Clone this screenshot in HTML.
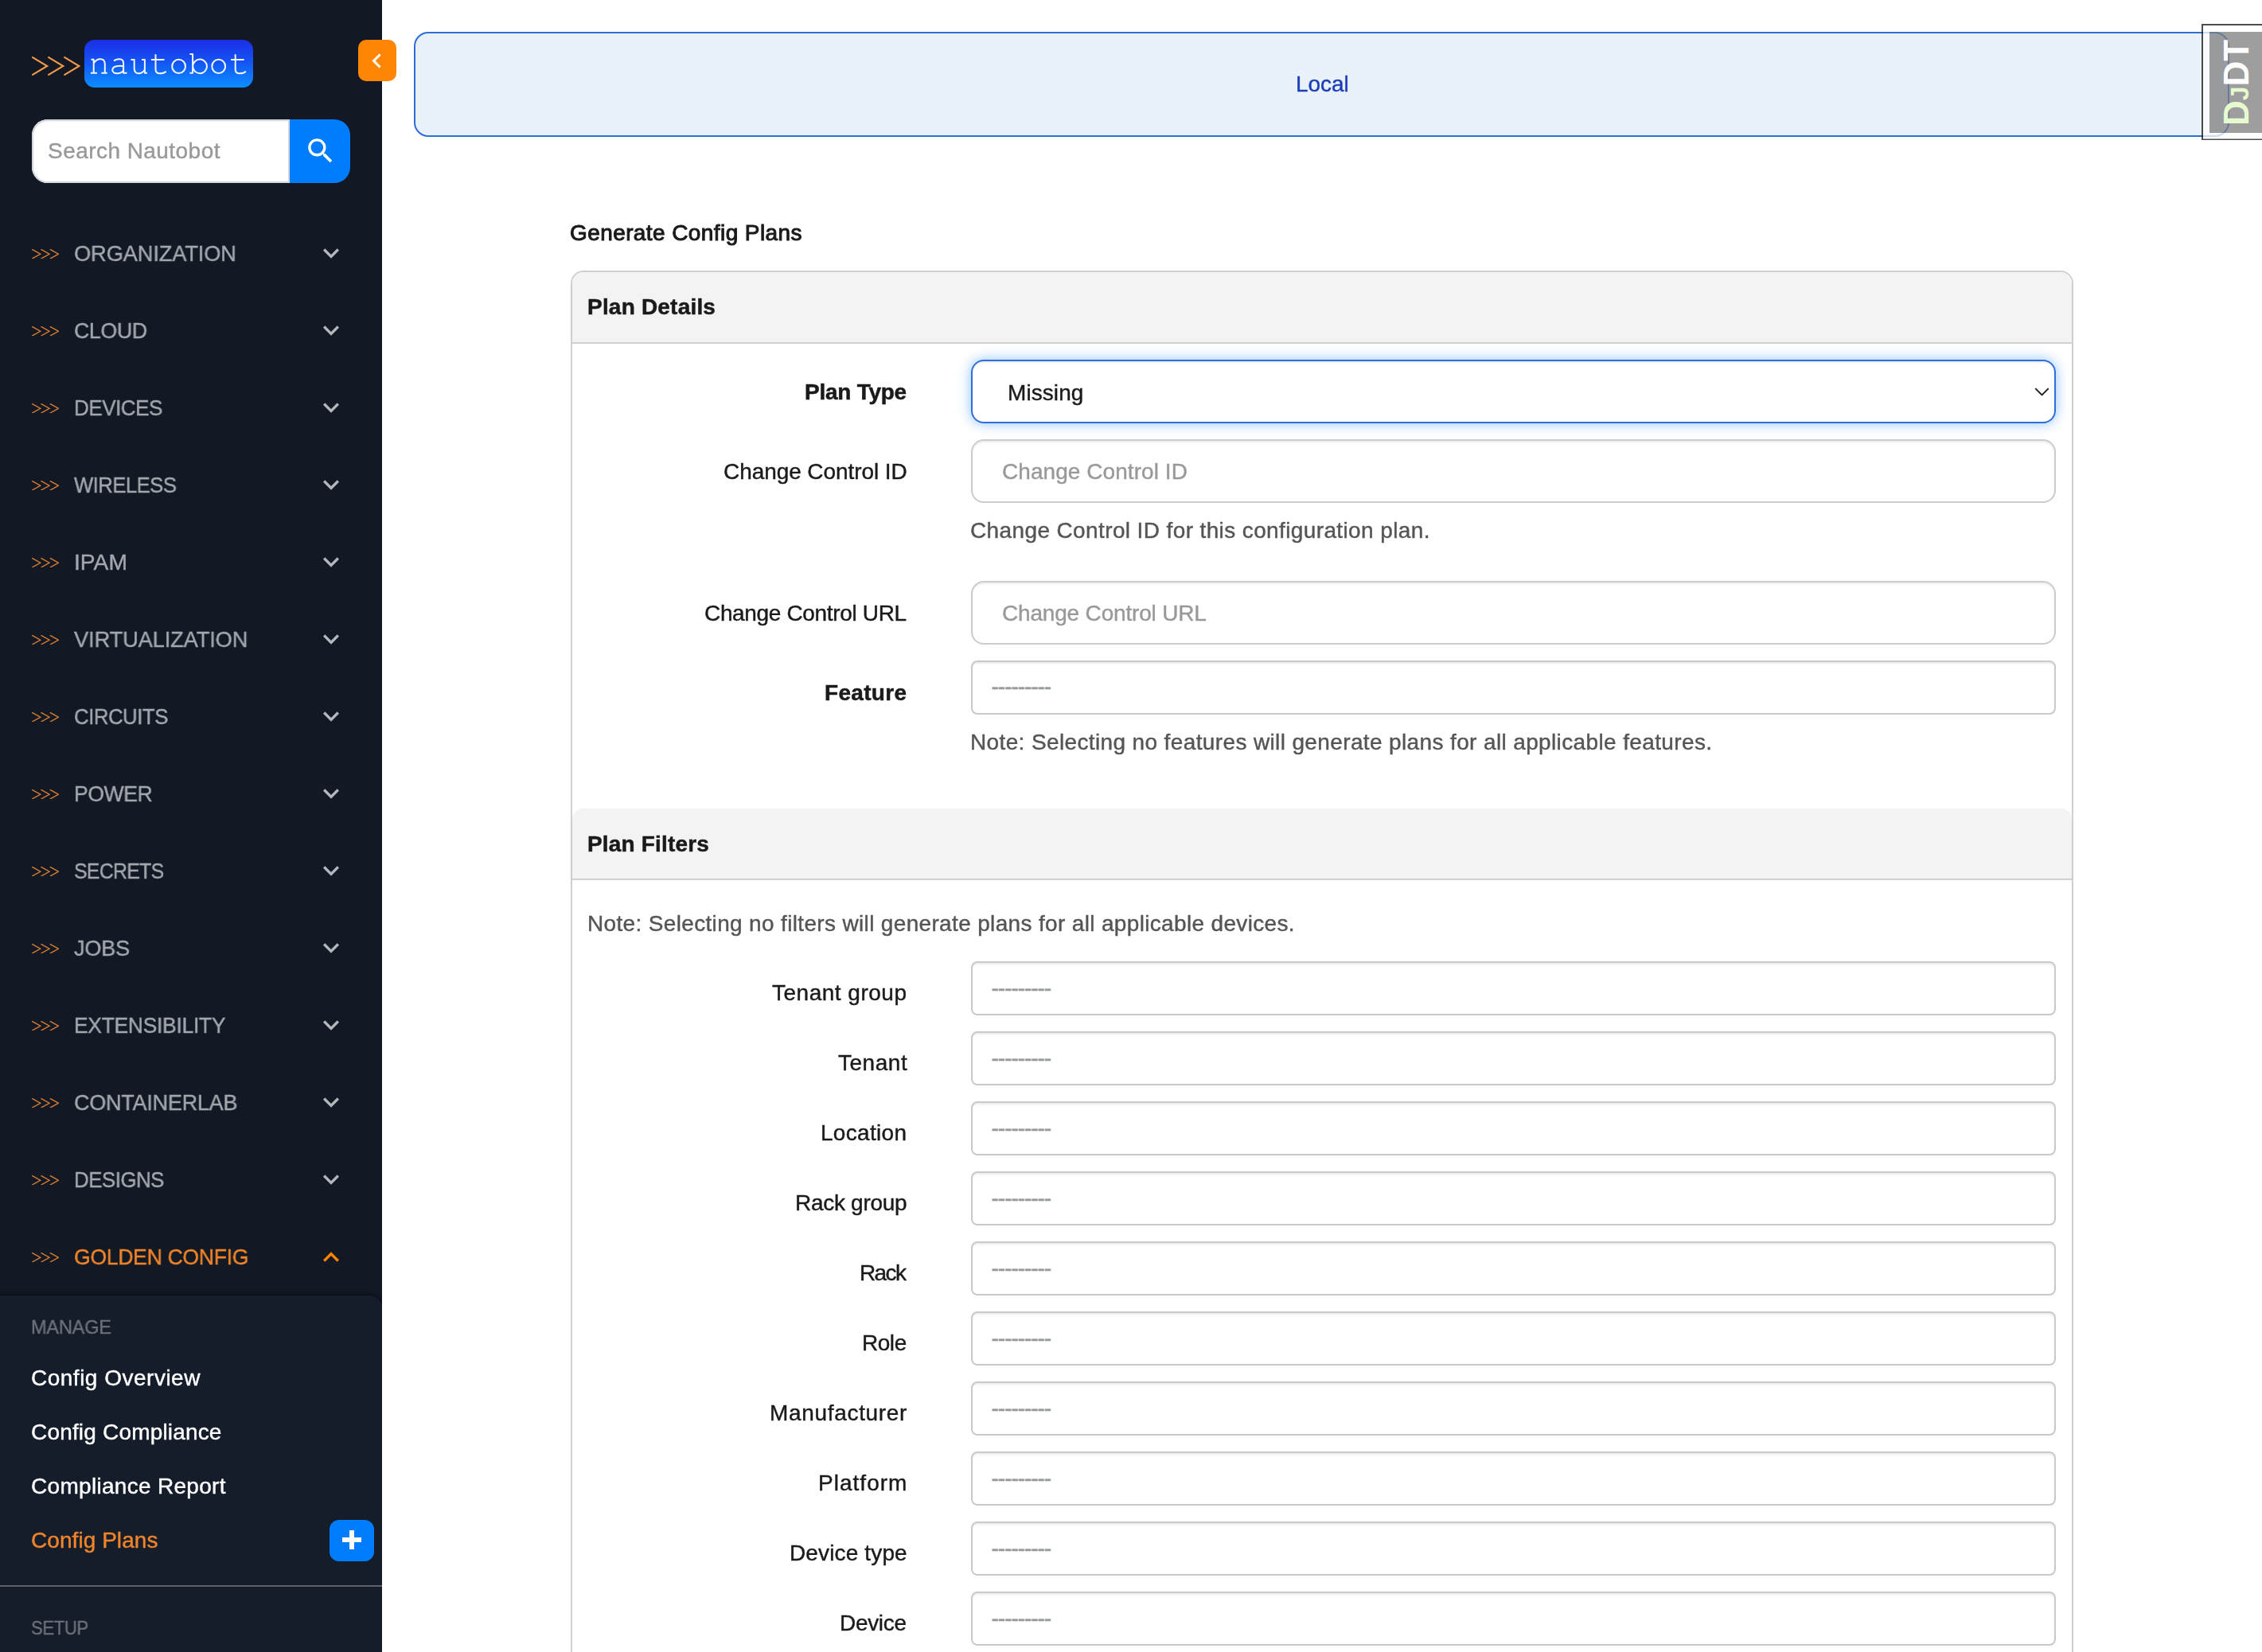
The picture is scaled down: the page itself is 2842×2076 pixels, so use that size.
<!DOCTYPE html>
<html lang="en"><head><meta charset="utf-8"><title>Generate Config Plans | Nautobot</title>
<style>
html,body{margin:0;padding:0;overflow:hidden;background:#fff}
body{width:2842px;height:2076px;font-family:"Liberation Sans",sans-serif}
#page{position:relative;width:2842px;height:2076px;overflow:hidden;background:#fff}
.a{position:absolute;display:block}
.t{position:absolute;white-space:pre;font-family:"Liberation Sans",sans-serif;will-change:transform}
#sidebar{left:0;top:0;width:480px;height:2076px;background:#121924;overflow:hidden}
#submenu{left:0;top:1628px;width:480px;height:460px;background:#161d2a;border-radius:0 16px 0 0;box-shadow:0 -2px 4px rgba(0,0,0,.4)}
#hr{left:0;top:1992px;width:480px;height:2px;background:#5b606b}
#logo{left:106px;top:50px;width:212px;height:60px;border-radius:13px;background:linear-gradient(180deg,#1b2fe6 0%,#1552f3 45%,#0a8fff 100%)}
#search{left:40px;top:150px;width:324px;height:80px;background:#fff;border-radius:20px 0 0 20px;box-shadow:inset 0 0 0 2px #d3d7dc,inset 0 3px 2px rgba(0,0,0,.06)}
#sbtn{left:364px;top:150px;width:76px;height:80px;background:#007dff;border-radius:0 20px 20px 0}
#toggle{left:450px;top:50px;width:48px;height:52px;background:#ff8504;border-radius:10px}
#plus{left:414px;top:1910px;width:56px;height:52px;background:#007dff;border-radius:12px}
#banner{left:520px;top:40px;width:2277px;height:128px;border:2px solid #2b6fd2;border-radius:18px;background:#e9f1fa}
#panel{left:717px;top:340px;width:1884px;height:1800px;border:2px solid #cfcfcf;border-radius:16px;background:#fff}
.ph{left:719px;width:1884px;height:88px;background:#f3f3f3;border-bottom:2px solid #d0d0d0;border-radius:14px 14px 0 0}
.inp{position:absolute;left:1220px;width:1359px;height:76px;border:2px solid #cccccc;border-radius:16px;background:#fff;box-shadow:inset 0 2px 2px rgba(0,0,0,.075)}
.s2{position:absolute;left:1220px;width:1359px;height:64px;border:2px solid #c9c9c9;border-radius:8px;background:#fff;box-shadow:inset 0 2px 2px rgba(0,0,0,.075)}
.dash{position:absolute;left:1245.6px;white-space:pre;font-size:28px;line-height:40px;color:#999;letter-spacing:-1.05px;-webkit-text-stroke:0.5px #999}
#sel{border-color:#2f6fd8;box-shadow:inset 0 2px 2px rgba(0,0,0,.075),0 0 16px rgba(64,150,255,.6)}
</style></head><body>
<div id="page">
<div id="sidebar" class="a"><div id="submenu" class="a"></div></div>
<div id="hr" class="a"></div>
<svg class="a" style="left:40px;top:71.0px;opacity:1" width="60.5" height="24" viewBox="0 0 60.5 24" fill="none" stroke="#f59a45" stroke-width="2.1" stroke-linecap="round" stroke-linejoin="miter"><polyline points="1.05,1.05 19.22,12.00 1.05,22.95"/><polyline points="21.17,1.05 39.33,12.00 21.17,22.95"/><polyline points="41.28,1.05 59.45,12.00 41.28,22.95"/></svg>
<div id="logo" class="a"><svg class="a" style="left:0;top:0" width="212" height="60" viewBox="0 0 212 60" fill="none" stroke="#f2f8ff" stroke-width="2" stroke-linecap="butt" stroke-linejoin="round"><title>nautobot</title><path d="M8.50,24.8H11.70V41.8M8.00,41.8H16.00M21.40,41.8H28.70M11.70,29.5C13.90,26 16.90,24.3 19.90,24.3C23.90,24.3 25.80,27 25.80,30.5V41.8M36.95,26.3C39.45,24.9 41.45,24.3 43.80,24.3C47.45,24.3 49.10,26.3 49.10,29.5V41.8H53.50M49.10,33.4C44.45,32.2 35.25,32.6 35.25,38C35.25,41 38.45,42.3 41.45,42.3C44.95,42.3 47.45,40.8 49.10,38.6M58.40,25H62.70V36C62.70,40 65.00,42.3 68.30,42.3C71.50,42.3 74.00,40.5 75.90,37.5M72.00,25H75.90V41.8H78.80M89.50,18.3V37C89.50,40.5 91.55,42.3 94.80,42.3C98.05,42.3 101.05,41.2 102.75,39.7M83.85,25H100.50M110.20,33.4A8.4,8.7 0 1,0 127.00,33.4A8.4,8.7 0 1,0 110.20,33.4ZM132.40,17.9H136.10V41.8H132.40M136.25,33.4A8.85,8.8 0 1,1 153.95,33.4A8.85,8.8 0 1,1 136.25,33.4ZM160.30,33.4A8.4,8.7 0 1,0 177.10,33.4A8.4,8.7 0 1,0 160.30,33.4ZM189.70,18.3V37C189.70,40.5 191.75,42.3 195.00,42.3C198.25,42.3 201.25,41.2 202.95,39.7M184.05,25H200.70"/></svg></div>
<div id="search" class="a"></div>
<div id="sbtn" class="a"><svg class="a" style="left:17.7px;top:18.6px" width="41.3" height="41.3" viewBox="0 0 24 24"><path fill="#fff" d="M9.5,3A6.5,6.5 0 0,1 16,9.5C16,11.11 15.41,12.59 14.44,13.73L14.71,14H15.5L20.5,19L19,20.5L14,15.5V14.71L13.73,14.44C12.59,15.41 11.11,16 9.5,16A6.5,6.5 0 0,1 3,9.5A6.5,6.5 0 0,1 9.5,3M9.5,5C7,5 5,7 5,9.5C5,12 7,14 9.5,14C12,14 14,12 14,9.5C14,7 12,5 9.5,5Z"/></svg></div>
<svg class="a" style="left:40px;top:312.75px;opacity:0.9" width="34" height="12.5" viewBox="0 0 34 12.5" fill="none" stroke="#f08a33" stroke-width="1.4" stroke-linecap="round" stroke-linejoin="miter"><polyline points="0.70,0.70 10.69,6.25 0.70,11.80"/><polyline points="12.00,0.70 22.00,6.25 12.00,11.80"/><polyline points="23.31,0.70 33.30,6.25 23.31,11.80"/></svg><svg class="a" style="left:396px;top:298px" width="40" height="40" viewBox="0 0 24 24"><path fill="#b4b7bc" d="M7.41,8.58L12,13.17L16.59,8.58L18,10L12,16L6,10L7.41,8.58Z"/></svg>
<svg class="a" style="left:40px;top:409.75px;opacity:0.9" width="34" height="12.5" viewBox="0 0 34 12.5" fill="none" stroke="#f08a33" stroke-width="1.4" stroke-linecap="round" stroke-linejoin="miter"><polyline points="0.70,0.70 10.69,6.25 0.70,11.80"/><polyline points="12.00,0.70 22.00,6.25 12.00,11.80"/><polyline points="23.31,0.70 33.30,6.25 23.31,11.80"/></svg><svg class="a" style="left:396px;top:395px" width="40" height="40" viewBox="0 0 24 24"><path fill="#b4b7bc" d="M7.41,8.58L12,13.17L16.59,8.58L18,10L12,16L6,10L7.41,8.58Z"/></svg>
<svg class="a" style="left:40px;top:506.75px;opacity:0.9" width="34" height="12.5" viewBox="0 0 34 12.5" fill="none" stroke="#f08a33" stroke-width="1.4" stroke-linecap="round" stroke-linejoin="miter"><polyline points="0.70,0.70 10.69,6.25 0.70,11.80"/><polyline points="12.00,0.70 22.00,6.25 12.00,11.80"/><polyline points="23.31,0.70 33.30,6.25 23.31,11.80"/></svg><svg class="a" style="left:396px;top:492px" width="40" height="40" viewBox="0 0 24 24"><path fill="#b4b7bc" d="M7.41,8.58L12,13.17L16.59,8.58L18,10L12,16L6,10L7.41,8.58Z"/></svg>
<svg class="a" style="left:40px;top:603.75px;opacity:0.9" width="34" height="12.5" viewBox="0 0 34 12.5" fill="none" stroke="#f08a33" stroke-width="1.4" stroke-linecap="round" stroke-linejoin="miter"><polyline points="0.70,0.70 10.69,6.25 0.70,11.80"/><polyline points="12.00,0.70 22.00,6.25 12.00,11.80"/><polyline points="23.31,0.70 33.30,6.25 23.31,11.80"/></svg><svg class="a" style="left:396px;top:589px" width="40" height="40" viewBox="0 0 24 24"><path fill="#b4b7bc" d="M7.41,8.58L12,13.17L16.59,8.58L18,10L12,16L6,10L7.41,8.58Z"/></svg>
<svg class="a" style="left:40px;top:700.75px;opacity:0.9" width="34" height="12.5" viewBox="0 0 34 12.5" fill="none" stroke="#f08a33" stroke-width="1.4" stroke-linecap="round" stroke-linejoin="miter"><polyline points="0.70,0.70 10.69,6.25 0.70,11.80"/><polyline points="12.00,0.70 22.00,6.25 12.00,11.80"/><polyline points="23.31,0.70 33.30,6.25 23.31,11.80"/></svg><svg class="a" style="left:396px;top:686px" width="40" height="40" viewBox="0 0 24 24"><path fill="#b4b7bc" d="M7.41,8.58L12,13.17L16.59,8.58L18,10L12,16L6,10L7.41,8.58Z"/></svg>
<svg class="a" style="left:40px;top:797.75px;opacity:0.9" width="34" height="12.5" viewBox="0 0 34 12.5" fill="none" stroke="#f08a33" stroke-width="1.4" stroke-linecap="round" stroke-linejoin="miter"><polyline points="0.70,0.70 10.69,6.25 0.70,11.80"/><polyline points="12.00,0.70 22.00,6.25 12.00,11.80"/><polyline points="23.31,0.70 33.30,6.25 23.31,11.80"/></svg><svg class="a" style="left:396px;top:783px" width="40" height="40" viewBox="0 0 24 24"><path fill="#b4b7bc" d="M7.41,8.58L12,13.17L16.59,8.58L18,10L12,16L6,10L7.41,8.58Z"/></svg>
<svg class="a" style="left:40px;top:894.75px;opacity:0.9" width="34" height="12.5" viewBox="0 0 34 12.5" fill="none" stroke="#f08a33" stroke-width="1.4" stroke-linecap="round" stroke-linejoin="miter"><polyline points="0.70,0.70 10.69,6.25 0.70,11.80"/><polyline points="12.00,0.70 22.00,6.25 12.00,11.80"/><polyline points="23.31,0.70 33.30,6.25 23.31,11.80"/></svg><svg class="a" style="left:396px;top:880px" width="40" height="40" viewBox="0 0 24 24"><path fill="#b4b7bc" d="M7.41,8.58L12,13.17L16.59,8.58L18,10L12,16L6,10L7.41,8.58Z"/></svg>
<svg class="a" style="left:40px;top:991.75px;opacity:0.9" width="34" height="12.5" viewBox="0 0 34 12.5" fill="none" stroke="#f08a33" stroke-width="1.4" stroke-linecap="round" stroke-linejoin="miter"><polyline points="0.70,0.70 10.69,6.25 0.70,11.80"/><polyline points="12.00,0.70 22.00,6.25 12.00,11.80"/><polyline points="23.31,0.70 33.30,6.25 23.31,11.80"/></svg><svg class="a" style="left:396px;top:977px" width="40" height="40" viewBox="0 0 24 24"><path fill="#b4b7bc" d="M7.41,8.58L12,13.17L16.59,8.58L18,10L12,16L6,10L7.41,8.58Z"/></svg>
<svg class="a" style="left:40px;top:1088.75px;opacity:0.9" width="34" height="12.5" viewBox="0 0 34 12.5" fill="none" stroke="#f08a33" stroke-width="1.4" stroke-linecap="round" stroke-linejoin="miter"><polyline points="0.70,0.70 10.69,6.25 0.70,11.80"/><polyline points="12.00,0.70 22.00,6.25 12.00,11.80"/><polyline points="23.31,0.70 33.30,6.25 23.31,11.80"/></svg><svg class="a" style="left:396px;top:1074px" width="40" height="40" viewBox="0 0 24 24"><path fill="#b4b7bc" d="M7.41,8.58L12,13.17L16.59,8.58L18,10L12,16L6,10L7.41,8.58Z"/></svg>
<svg class="a" style="left:40px;top:1185.75px;opacity:0.9" width="34" height="12.5" viewBox="0 0 34 12.5" fill="none" stroke="#f08a33" stroke-width="1.4" stroke-linecap="round" stroke-linejoin="miter"><polyline points="0.70,0.70 10.69,6.25 0.70,11.80"/><polyline points="12.00,0.70 22.00,6.25 12.00,11.80"/><polyline points="23.31,0.70 33.30,6.25 23.31,11.80"/></svg><svg class="a" style="left:396px;top:1171px" width="40" height="40" viewBox="0 0 24 24"><path fill="#b4b7bc" d="M7.41,8.58L12,13.17L16.59,8.58L18,10L12,16L6,10L7.41,8.58Z"/></svg>
<svg class="a" style="left:40px;top:1282.75px;opacity:0.9" width="34" height="12.5" viewBox="0 0 34 12.5" fill="none" stroke="#f08a33" stroke-width="1.4" stroke-linecap="round" stroke-linejoin="miter"><polyline points="0.70,0.70 10.69,6.25 0.70,11.80"/><polyline points="12.00,0.70 22.00,6.25 12.00,11.80"/><polyline points="23.31,0.70 33.30,6.25 23.31,11.80"/></svg><svg class="a" style="left:396px;top:1268px" width="40" height="40" viewBox="0 0 24 24"><path fill="#b4b7bc" d="M7.41,8.58L12,13.17L16.59,8.58L18,10L12,16L6,10L7.41,8.58Z"/></svg>
<svg class="a" style="left:40px;top:1379.75px;opacity:0.9" width="34" height="12.5" viewBox="0 0 34 12.5" fill="none" stroke="#f08a33" stroke-width="1.4" stroke-linecap="round" stroke-linejoin="miter"><polyline points="0.70,0.70 10.69,6.25 0.70,11.80"/><polyline points="12.00,0.70 22.00,6.25 12.00,11.80"/><polyline points="23.31,0.70 33.30,6.25 23.31,11.80"/></svg><svg class="a" style="left:396px;top:1365px" width="40" height="40" viewBox="0 0 24 24"><path fill="#b4b7bc" d="M7.41,8.58L12,13.17L16.59,8.58L18,10L12,16L6,10L7.41,8.58Z"/></svg>
<svg class="a" style="left:40px;top:1476.75px;opacity:0.9" width="34" height="12.5" viewBox="0 0 34 12.5" fill="none" stroke="#f08a33" stroke-width="1.4" stroke-linecap="round" stroke-linejoin="miter"><polyline points="0.70,0.70 10.69,6.25 0.70,11.80"/><polyline points="12.00,0.70 22.00,6.25 12.00,11.80"/><polyline points="23.31,0.70 33.30,6.25 23.31,11.80"/></svg><svg class="a" style="left:396px;top:1462px" width="40" height="40" viewBox="0 0 24 24"><path fill="#b4b7bc" d="M7.41,8.58L12,13.17L16.59,8.58L18,10L12,16L6,10L7.41,8.58Z"/></svg>
<svg class="a" style="left:40px;top:1573.75px;opacity:0.9" width="34" height="12.5" viewBox="0 0 34 12.5" fill="none" stroke="#f08a33" stroke-width="1.4" stroke-linecap="round" stroke-linejoin="miter"><polyline points="0.70,0.70 10.69,6.25 0.70,11.80"/><polyline points="12.00,0.70 22.00,6.25 12.00,11.80"/><polyline points="23.31,0.70 33.30,6.25 23.31,11.80"/></svg><svg class="a" style="left:396px;top:1560px" width="40" height="40" viewBox="0 0 24 24"><path fill="#ff8504" d="M7.41,15.41L12,10.83L16.59,15.41L18,14L12,8L6,14L7.41,15.41Z"/></svg>

<div id="plus" class="a"><svg class="a" style="left:10px;top:6.5px" width="36" height="36" viewBox="0 0 24 24"><path fill="#fff" d="M20 14H14V20H10V14H4V10H10V4H14V10H20V14Z"/></svg></div>

<div id="banner" class="a"></div>
<div id="panel" class="a"></div>
<div class="a ph" style="top:342px"></div>
<div class="a ph" style="top:1016px"></div>
<div id="sel" class="inp" style="top:452px"></div>
<svg class="a" style="left:2556.4px;top:486.6px" width="19" height="11" viewBox="0 0 19 11" fill="none" stroke="#222" stroke-width="2" stroke-linecap="round" stroke-linejoin="round"><polyline points="1.8,1.6 9.5,9.4 17.2,1.6"/></svg>
<div class="inp" style="top:552px"></div>
<div class="inp" style="top:730px"></div>
<div class="s2" style="top:830px"></div><span class="dash" style="top:843px">---------</span>
<div class="s2" style="top:1208px"></div><span class="dash" style="top:1222px">---------</span>
<div class="s2" style="top:1296px"></div><span class="dash" style="top:1310px">---------</span>
<div class="s2" style="top:1384px"></div><span class="dash" style="top:1398px">---------</span>
<div class="s2" style="top:1472px"></div><span class="dash" style="top:1486px">---------</span>
<div class="s2" style="top:1560px"></div><span class="dash" style="top:1574px">---------</span>
<div class="s2" style="top:1648px"></div><span class="dash" style="top:1662px">---------</span>
<div class="s2" style="top:1736px"></div><span class="dash" style="top:1750px">---------</span>
<div class="s2" style="top:1824px"></div><span class="dash" style="top:1838px">---------</span>
<div class="s2" style="top:1912px"></div><span class="dash" style="top:1926px">---------</span>
<div class="s2" style="top:2000px"></div><span class="dash" style="top:2014px">---------</span>

<div id="toggle" class="a"><svg class="a" style="left:5.2px;top:8px" width="37" height="37" viewBox="0 0 24 24"><path fill="#fff5e8" d="M15.41,16.58L10.83,12L15.41,7.41L14,6L8,12L14,18L15.41,16.58Z"/></svg></div>
<span class="t" style="left:92.9px;top:299.0px;font-size:28px;line-height:40px;color:#a3a7ad;letter-spacing:-0.16px;-webkit-text-stroke:0.42px #a3a7ad;transform:scaleX(0.9745);transform-origin:0 50%;">ORGANIZATION</span>
<span class="t" style="left:92.9px;top:396.0px;font-size:28px;line-height:40px;color:#a3a7ad;letter-spacing:-0.38px;-webkit-text-stroke:0.42px #a3a7ad;transform:scaleX(0.9544);transform-origin:0 50%;">CLOUD</span>
<span class="t" style="left:92.9px;top:493.0px;font-size:28px;line-height:40px;color:#a3a7ad;letter-spacing:-0.5px;-webkit-text-stroke:0.42px #a3a7ad;transform:scaleX(0.9288);transform-origin:0 50%;">DEVICES</span>
<span class="t" style="left:92.9px;top:590.0px;font-size:28px;line-height:40px;color:#a3a7ad;letter-spacing:-0.59px;-webkit-text-stroke:0.42px #a3a7ad;transform:scaleX(0.9169);transform-origin:0 50%;">WIRELESS</span>
<span class="t" style="left:92.9px;top:687.0px;font-size:28px;line-height:40px;color:#a3a7ad;letter-spacing:0.04px;-webkit-text-stroke:0.42px #a3a7ad;transform:scaleX(1.0057);transform-origin:0 50%;">IPAM</span>
<span class="t" style="left:92.9px;top:784.0px;font-size:28px;line-height:40px;color:#a3a7ad;letter-spacing:-0.15px;-webkit-text-stroke:0.42px #a3a7ad;transform:scaleX(0.9743);transform-origin:0 50%;">VIRTUALIZATION</span>
<span class="t" style="left:92.9px;top:881.0px;font-size:28px;line-height:40px;color:#a3a7ad;letter-spacing:-0.52px;-webkit-text-stroke:0.42px #a3a7ad;transform:scaleX(0.9205);transform-origin:0 50%;">CIRCUITS</span>
<span class="t" style="left:92.9px;top:978.0px;font-size:28px;line-height:40px;color:#a3a7ad;letter-spacing:-0.46px;-webkit-text-stroke:0.42px #a3a7ad;transform:scaleX(0.9494);transform-origin:0 50%;">POWER</span>
<span class="t" style="left:92.9px;top:1075.0px;font-size:28px;line-height:40px;color:#a3a7ad;letter-spacing:-0.84px;-webkit-text-stroke:0.42px #a3a7ad;transform:scaleX(0.8899);transform-origin:0 50%;">SECRETS</span>
<span class="t" style="left:92.9px;top:1172.0px;font-size:28px;line-height:40px;color:#a3a7ad;letter-spacing:-0.26px;-webkit-text-stroke:0.42px #a3a7ad;transform:scaleX(0.9687);transform-origin:0 50%;">JOBS</span>
<span class="t" style="left:92.9px;top:1269.0px;font-size:28px;line-height:40px;color:#a3a7ad;letter-spacing:-0.32px;-webkit-text-stroke:0.42px #a3a7ad;transform:scaleX(0.9447);transform-origin:0 50%;">EXTENSIBILITY</span>
<span class="t" style="left:92.9px;top:1366.0px;font-size:28px;line-height:40px;color:#a3a7ad;letter-spacing:-0.24px;-webkit-text-stroke:0.42px #a3a7ad;transform:scaleX(0.9638);transform-origin:0 50%;">CONTAINERLAB</span>
<span class="t" style="left:92.9px;top:1463.0px;font-size:28px;line-height:40px;color:#a3a7ad;letter-spacing:-0.55px;-webkit-text-stroke:0.42px #a3a7ad;transform:scaleX(0.9238);transform-origin:0 50%;">DESIGNS</span>
<span class="t" style="left:92.9px;top:1560.0px;font-size:28px;line-height:40px;color:#f0842a;letter-spacing:-0.33px;-webkit-text-stroke:0.42px #f0842a;transform:scaleX(0.95);transform-origin:0 50%;">GOLDEN CONFIG</span>
<span class="t" style="left:38.9px;top:1648.0px;font-size:24px;line-height:40px;color:#6c717a;letter-spacing:-0.16px;-webkit-text-stroke:0.42px #6c717a;transform:scaleX(0.9774);transform-origin:0 50%;">MANAGE</span>
<span class="t" style="left:38.9px;top:2026.0px;font-size:24px;line-height:40px;color:#6c717a;letter-spacing:-0.51px;-webkit-text-stroke:0.42px #6c717a;transform:scaleX(0.9248);transform-origin:0 50%;">SETUP</span>
<span class="t" style="left:38.9px;top:1712.0px;font-size:28px;line-height:40px;color:#ffffff;letter-spacing:0.5px;-webkit-text-stroke:0.42px #ffffff;">Config Overview</span>
<span class="t" style="left:38.9px;top:1780.0px;font-size:28px;line-height:40px;color:#ffffff;letter-spacing:0.18px;-webkit-text-stroke:0.42px #ffffff;">Config Compliance</span>
<span class="t" style="left:38.9px;top:1848.0px;font-size:28px;line-height:40px;color:#ffffff;letter-spacing:0.3px;-webkit-text-stroke:0.42px #ffffff;">Compliance Report</span>
<span class="t" style="left:38.9px;top:1916.0px;font-size:28px;line-height:40px;color:#f0842a;letter-spacing:0.06px;-webkit-text-stroke:0.42px #f0842a;">Config Plans</span>
<span class="t" style="left:60.4px;top:170.2px;font-size:28px;line-height:40px;color:#999999;letter-spacing:0.45px;-webkit-text-stroke:0.42px #999999;">Search Nautobot</span>
<span class="t" style="left:1627.9px;top:86.3px;font-size:28px;line-height:40px;color:#1b3fb5;letter-spacing:-0.08px;-webkit-text-stroke:0.42px #1b3fb5;">Local</span>
<span class="t" style="left:715.9px;top:272.9px;font-size:28px;line-height:40px;color:#1a1a1a;letter-spacing:0.41px;-webkit-text-stroke:1.0px #1a1a1a;">Generate Config Plans</span>
<span class="t" style="left:738.0px;top:366.4px;font-size:28px;line-height:40px;color:#1a1a1a;font-weight:700;letter-spacing:0.2px;-webkit-text-stroke:0.5px #1a1a1a;">Plan Details</span>
<span class="t" style="left:738.0px;top:1041.1px;font-size:28px;line-height:40px;color:#1a1a1a;font-weight:700;letter-spacing:0.18px;-webkit-text-stroke:0.5px #1a1a1a;">Plan Filters</span>
<span class="t" style="left:1011.2px;top:472.9px;font-size:28px;line-height:40px;color:#1a1a1a;font-weight:700;letter-spacing:-0.25px;-webkit-text-stroke:0.5px #1a1a1a;">Plan Type</span>
<span class="t" style="left:908.6px;top:572.9px;font-size:28px;line-height:40px;color:#1a1a1a;letter-spacing:-0.07px;-webkit-text-stroke:0.42px #1a1a1a;">Change Control ID</span>
<span class="t" style="left:885.3px;top:750.9px;font-size:28px;line-height:40px;color:#1a1a1a;letter-spacing:-0.34px;-webkit-text-stroke:0.42px #1a1a1a;">Change Control URL</span>
<span class="t" style="left:1036.4px;top:850.6px;font-size:28px;line-height:40px;color:#1a1a1a;font-weight:700;letter-spacing:0.31px;-webkit-text-stroke:0.5px #1a1a1a;">Feature</span>
<span class="t" style="left:1266.4px;top:473.6px;font-size:28px;line-height:40px;color:#1a1a1a;letter-spacing:0.08px;-webkit-text-stroke:0.42px #1a1a1a;">Missing</span>
<span class="t" style="left:1258.6px;top:572.9px;font-size:28px;line-height:40px;color:#999999;letter-spacing:0.06px;-webkit-text-stroke:0.42px #999999;">Change Control ID</span>
<span class="t" style="left:1258.6px;top:750.9px;font-size:28px;line-height:40px;color:#999999;letter-spacing:-0.18px;-webkit-text-stroke:0.42px #999999;">Change Control URL</span>
<span class="t" style="left:1219.4px;top:646.6px;font-size:28px;line-height:40px;color:#555555;letter-spacing:0.38px;-webkit-text-stroke:0.42px #555555;">Change Control ID for this configuration plan.</span>
<span class="t" style="left:1219.4px;top:913.0px;font-size:28px;line-height:40px;color:#555555;letter-spacing:0.37px;-webkit-text-stroke:0.42px #555555;">Note: Selecting no features will generate plans for all applicable features.</span>
<span class="t" style="left:737.9px;top:1140.6px;font-size:28px;line-height:40px;color:#555555;letter-spacing:0.34px;-webkit-text-stroke:0.42px #555555;">Note: Selecting no filters will generate plans for all applicable devices.</span>
<span class="t" style="left:970.4px;top:1228.1px;font-size:28px;line-height:40px;color:#1a1a1a;letter-spacing:0.5px;-webkit-text-stroke:0.42px #1a1a1a;">Tenant group</span>
<span class="t" style="left:1052.7px;top:1316.1px;font-size:28px;line-height:40px;color:#1a1a1a;letter-spacing:0.52px;-webkit-text-stroke:0.42px #1a1a1a;">Tenant</span>
<span class="t" style="left:1031.4px;top:1404.1px;font-size:28px;line-height:40px;color:#1a1a1a;letter-spacing:0.3px;-webkit-text-stroke:0.42px #1a1a1a;">Location</span>
<span class="t" style="left:998.8px;top:1492.1px;font-size:28px;line-height:40px;color:#1a1a1a;letter-spacing:-0.29px;-webkit-text-stroke:0.42px #1a1a1a;">Rack group</span>
<span class="t" style="left:1080.4px;top:1580.1px;font-size:28px;line-height:40px;color:#1a1a1a;letter-spacing:-1.6px;-webkit-text-stroke:0.42px #1a1a1a;">Rack</span>
<span class="t" style="left:1083.2px;top:1668.1px;font-size:28px;line-height:40px;color:#1a1a1a;letter-spacing:-0.46px;-webkit-text-stroke:0.42px #1a1a1a;">Role</span>
<span class="t" style="left:967.0px;top:1756.1px;font-size:28px;line-height:40px;color:#1a1a1a;letter-spacing:0.68px;-webkit-text-stroke:0.42px #1a1a1a;">Manufacturer</span>
<span class="t" style="left:1028.0px;top:1844.1px;font-size:28px;line-height:40px;color:#1a1a1a;letter-spacing:1.02px;-webkit-text-stroke:0.42px #1a1a1a;">Platform</span>
<span class="t" style="left:991.7px;top:1932.1px;font-size:28px;line-height:40px;color:#1a1a1a;letter-spacing:0.14px;-webkit-text-stroke:0.42px #1a1a1a;">Device type</span>
<span class="t" style="left:1055.4px;top:2020.1px;font-size:28px;line-height:40px;color:#1a1a1a;letter-spacing:-0.32px;-webkit-text-stroke:0.42px #1a1a1a;">Device</span>
<div id="djdt" class="a" style="left:2766px;top:30px;width:120px;height:142px;border:2px solid #111;background:#fff;opacity:.75">
 <div class="a" style="left:0;top:0;width:120px;height:127px;border:8px solid #fff;border-right:0;background:#000;opacity:.5;box-sizing:content-box"></div>
</div>
<div class="a" style="left:2794px;top:157.8px;width:0;height:0;transform:rotate(-90deg);transform-origin:0 0">
 <span style="position:absolute;left:0;top:0;white-space:pre;font-weight:700;font-size:44px;line-height:32px;color:#fdfdfd;letter-spacing:0px"><span style="color:#e6fbd0">D<span style="font-size:32px">J</span></span>DT</span>
</div>
</div>
</body></html>
